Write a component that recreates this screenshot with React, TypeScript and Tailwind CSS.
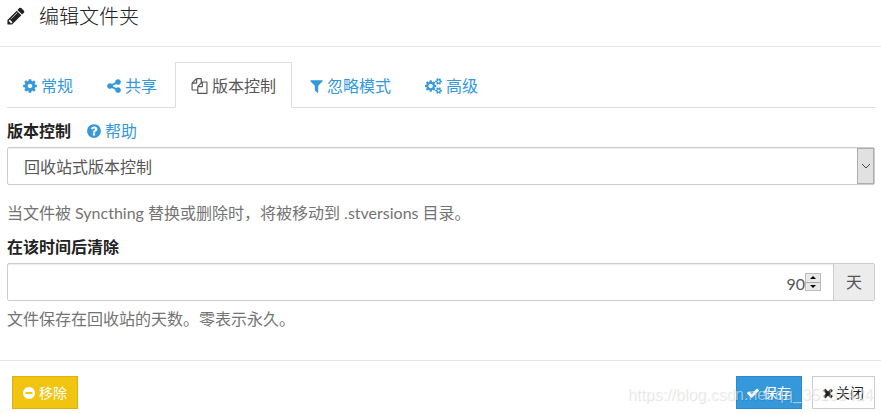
import { useState } from "react";
import type { ReactNode } from "react";

const DISC =
  "m320-64q0 209-103 385.5t-279.5 279.5-385.5 103-385.5-103-279.5-279.5-103-385.5 103-385.5 279.5-279.5 385.5-103 385.5 103 279.5 279.5 103 385.5z";

const SMALL_COG =
  "v140q0 16-149 31-12 27-30 52 51 113 51 138 0 4-4 7-122 71-124 71-8 0-46-47t-52-68q-20 2-30 2t-30-2q-14 21-52 68t-46 47q-2 0-124-71-4-3-4-7 0-25 51-138-18-25-30-52-149-15-149-31v-140q0-16 149-31 13-29 30-52-51-113-51-138 0-4 4-7 4-2 35-20t59-34 30-16q8 0 46 46.5t52 67.5q20-2 30-2t30 2q51-71 92-112l6-2q4 0 124 70 4 3 4 7 0 25-51 138 17 23 30 52 149 15 149 31z";

const ICONS = {
  pencil: {
    viewBox: "128 0 1536 1792",
    d: "M491 1536l91-91-235-235-91 91v107h128v128h107zm523-928q0-22-22-22-10 0-17 7l-542 542q-7 7-7 17 0 22 22 22 10 0 17-7l542-542q7-7 7-17zm-54-192l416 416-832 832h-416v-416zm683 96q0 53-37 90l-166 166-416-416 166-165q36-38 90-38 53 0 91 38l235 234q37 39 37 91z",
  },
  cog: {
    viewBox: "128 0 1536 1792",
    d: "M1152 896q0-106-75-181t-181-75-181 75-75 181 75 181 181 75 181-75 75-181zm512-109v222q0 12-8 23t-20 13l-185 28q-19 54-39 91 35 50 107 138 10 12 10 25t-9 23q-27 37-99 108t-94 71q-12 0-26-9l-138-108q-44 23-91 38-16 136-29 186-7 28-36 28h-222q-14 0-24.5-8.5t-11.5-21.5l-28-184q-49-16-90-37l-141 107q-10 9-25 9-14 0-25-11-126-114-165-168-7-10-7-23 0-12 8-23 15-21 51-66.5t54-70.5q-27-50-41-99l-183-27q-13-2-21-12.5t-8-23.5v-222q0-12 8-23t19-13l186-28q14-46 39-92-40-57-107-138-10-12-10-24 0-10 9-23 26-36 98.5-107.5t94.5-71.5q13 0 26 10l138 107q44-23 91-38 16-136 29-186 7-28 36-28h222q14 0 24.5 8.5t11.5 21.5l28 184q49 16 90 37l142-107q9-9 24-9 13 0 25 10 129 119 165 170 7 8 7 22 0 12-8 23-15 21-51 66.5t-54 70.5q26 50 41 98l183 28q13 2 21 12.5t8 23.5z",
  },
  share: {
    viewBox: "128 0 1536 1792",
    d: "M1344 1024q133 0 226.5 93.5t93.5 226.5-93.5 226.5-226.5 93.5-226.5-93.5-93.5-226.5q0-12 2-34l-360-180q-92 86-218 86-133 0-226.5-93.5t-93.5-226.5 93.5-226.5 226.5-93.5q126 0 218 86l360-180q-2-22-2-34 0-133 93.5-226.5t226.5-93.5 226.5 93.5 93.5 226.5-93.5 226.5-226.5 93.5q-126 0-218-86l-360 180q2 22 2 34t-2 34l360 180q92-86 218-86z",
  },
  files: {
    viewBox: "0 0 1792 1792",
    d: "M1696 384q40 0 68 28t28 68v1216q0 40-28 68t-68 28h-960q-40 0-68-28t-28-68v-288h-544q-40 0-68-28t-28-68v-672q0-40 20-88t48-76l408-408q28-28 76-48t88-20h416q40 0 68 28t28 68v328q68-40 128-40h416zm-544 213l-299 299h299v-299zm-640-384l-299 299h299v-299zm196 647l316-316v-416h-384v416q0 40-28 68t-68 28h-416v640h512v-256q0-40 20-88t48-76zm956 804v-1152h-384v416q0 40-28 68t-68 28h-416v640h896z",
  },
  filter: {
    viewBox: "192 0 1408 1792",
    d: "M1595 295q17 41-14 70l-493 493v742q0 42-39 59-13 5-25 5-27 0-45-19l-256-256q-19-19-19-45v-486l-493-493q-31-29-14-70 17-39 59-39h1280q42 0 59 39z",
  },
  cogs: {
    viewBox: "-64 0 1920 1792",
    d:
      "M832 896q0-106-75-181t-181-75-181 75-75 181 75 181 181 75 181-75 75-181zm768 512q0-52-38-90t-90-38-90 38-38 90q0 53 37.5 90.5t90.5 37.5 90.5-37.5 37.5-90.5zm0-1024q0-52-38-90t-90-38-90 38-38 90q0 53 37.5 90.5t90.5 37.5 90.5-37.5 37.5-90.5zm-384 421v185q0 10-7 19.5t-16 10.5l-155 24q-11 35-32 76 34 48 90 115 7 11 7 20 0 12-7 19-23 30-82.5 89.5t-78.5 59.5q-11 0-21-7l-115-90q-37 19-77 31-11 108-23 155-7 24-30 24h-186q-11 0-20-7.5t-10-17.5l-23-153q-34-10-75-31l-118 89q-7 7-20 7-11 0-21-8-144-133-144-160 0-9 7-19 10-14 41-53t47-61q-23-44-35-82l-152-24q-10-1-17-9.5t-7-19.5v-185q0-10 7-19.5t16-10.5l155-24q11-35 32-76-34-48-90-115-7-11-7-20 0-12 7-20 22-30 82-89t79-59q11 0 21 7l115 90q34-18 77-32 11-108 23-154 7-24 30-24h186q11 0 20 7.5t10 17.5l23 153q34 10 75 31l118-89q8-7 20-7 11 0 21 8 144 133 144 160 0 8-7 19-12 16-42 54t-45 60q23 48 34 82l152 23q10 2 17 10.5t7 19.5zm640 533" +
      SMALL_COG +
      "m0-1024" +
      SMALL_COG,
  },
  question: {
    viewBox: "128 0 1536 1792",
    d:
      "M1024 1376v-192q0-14-9-23t-23-9h-192q-14 0-23 9t-9 23v192q0 14 9 23t23 9h192q14 0 23-9t9-23zm256-672q0-88-55.5-163t-138.5-116-170-41q-243 0-371 213-15 24 8 42l132 100q7 6 19 6 16 0 25-12 53-68 86-92 34-24 86-24 48 0 85.5 26t37.5 59q0 38-20 61t-68 45q-63 28-115.5 86.5t-52.5 125.5v36q0 14 9 23t23 9h192q14 0 23-9t9-23q0-19 21.5-49.5t54.5-49.5q32-18 49-28.5t46-35 44.5-48 28-60.5 12.5-81zm64 256" +
      DISC,
  },
  minus: {
    viewBox: "128 0 1536 1792",
    d:
      "M1344 960v-128q0-26-19-45t-45-19h-768q-26 0-45 19t-19 45v128q0 26 19 45t45 19h768q26 0 45-19t19-45z" +
      DISC,
  },
  check: {
    viewBox: "121 0 1550 1792",
    d: "M1671 566q0 40-28 68l-724 724-136 136q-28 28-68 28t-68-28l-136-136-362-362q-28-28-28-68t28-68l136-136q28-28 68-28t68 28l294 295 656-657q28-28 68-28t68 28l136 136q28 28 28 68z",
  },
  times: {
    viewBox: "256 0 1280 1792",
    d: "M1490 1322q0 40-28 68l-136 136q-28 28-68 28t-68-28l-294-294-294 294q-28 28-68 28t-68-28l-136-136q-28-28-28-68t28-68l294-294-294-294q-28-28-28-68t28-68l136-136q28-28 68-28t68 28l294 294 294-294q28-28 68-28t68 28l136 136q28 28 28 68t-28 68l-294 294 294 294q28 28 28 68z",
  },
};

type IconName = keyof typeof ICONS;

const Icon = ({ name, className }: { name: IconName; className: string }) => (
  <svg
    viewBox={ICONS[name].viewBox}
    className={`shrink-0 fill-current ${className}`}
    aria-hidden="true"
  >
    <path d={ICONS[name].d} />
  </svg>
);

const TABS: { id: string; label: string; icon: IconName; iconClass: string }[] = [
  { id: "general", label: "常规", icon: "cog", iconClass: "h-4 w-3.5" },
  { id: "sharing", label: "共享", icon: "share", iconClass: "h-4 w-3.5" },
  { id: "versioning", label: "版本控制", icon: "files", iconClass: "h-4 w-[17px]" },
  { id: "ignore", label: "忽略模式", icon: "filter", iconClass: "h-4 w-[13px]" },
  { id: "advanced", label: "高级", icon: "cogs", iconClass: "h-4 w-[17px]" },
];

const HelpBlock = ({ children }: { children: ReactNode }) => (
  <p className="leading-6 text-[#737373]">{children}</p>
);

export default function App() {
  const [activeTab, setActiveTab] = useState("versioning");
  const [days, setDays] = useState(90);

  return (
    <div className="relative bg-white font-['Lato','Noto_Sans_CJK_SC',sans-serif] text-base text-[#222]">
      <header className="flex h-[47px] items-start border-b border-[#e5e5e5] pl-[7px]">
        <h4 className="flex items-center gap-3.5 text-xl leading-8 font-light">
          <Icon name="pencil" className="h-5 w-[18px]" />
          编辑文件夹
        </h4>
      </header>

      <main className="pt-[15px] pr-1.5 pb-7 pl-[7px]">
        <div role="tablist" className="flex gap-0.5 border-b border-[#ddd]">
          {TABS.map((tab) => (
            <button
              key={tab.id}
              type="button"
              role="tab"
              aria-selected={activeTab === tab.id}
              onClick={() => setActiveTab(tab.id)}
              className={`-mb-px flex h-[46px] items-center gap-1 border px-[15px] pt-0.5 ${
                activeTab === tab.id
                  ? "border-[#ddd] border-b-white bg-white text-[#555]"
                  : "border-transparent text-[#3498db]"
              }`}
            >
              <Icon name={tab.icon} className={tab.iconClass} />
              {tab.label}
            </button>
          ))}
        </div>

        <div className="flex items-center gap-4 pt-[11px] pb-1 leading-6">
          <label htmlFor="versioning" className="font-bold">
            版本控制
          </label>
          <a href="#help" className="flex items-center gap-1 text-[#3498db]">
            <Icon name="question" className="h-4 w-3.5" />
            帮助
          </a>
        </div>
        <div className="relative">
          <select
            id="versioning"
            className="block h-[38px] w-full appearance-none rounded-xs border border-[#ccc] bg-white pt-0.5 pr-8 pl-4 text-[#555] shadow-[inset_0_1px_1px_rgba(0,0,0,0.075)]"
          >
            <option>回收站式版本控制</option>
          </select>
          <span className="pointer-events-none absolute inset-y-px right-px flex w-[17px] items-center justify-center border border-[#adadad] bg-[#e1e1e1]">
            <svg viewBox="0 0 10 6" className="h-1.5 w-2.5 fill-none stroke-[#444]">
              <path d="M1 1l4 4 4-4" />
            </svg>
          </span>
        </div>
        <div className="pt-4 pb-2.5">
          <HelpBlock>
            当文件被 Syncthing 替换或删除时，将被移动到 .stversions 目录。
          </HelpBlock>
        </div>

        <label htmlFor="days" className="block pb-1 leading-6 font-bold">
          在该时间后清除
        </label>
        <div className="flex h-[38px] rounded-xs border border-[#ccc] text-[#555]">
          <div className="flex flex-1 items-center pr-3 shadow-[inset_0_1px_1px_rgba(0,0,0,0.075)]">
            <input
              id="days"
              type="number"
              value={days}
              onChange={(e) => setDays(Number(e.target.value))}
              className="h-full min-w-0 flex-1 bg-transparent pt-0.5 text-right outline-none [&::-webkit-inner-spin-button]:appearance-none"
            />
            <span className="flex h-[18px] w-4 flex-col border border-[#bbb] bg-[#e9e9e9]">
              <button
                type="button"
                aria-label="增加"
                onClick={() => setDays(days + 1)}
                className="flex flex-1 items-center justify-center border-b border-[#aaa]"
              >
                <svg viewBox="0 0 6 3" className="h-[3px] w-1.5 fill-black">
                  <path d="M0 3l3-3 3 3z" />
                </svg>
              </button>
              <button
                type="button"
                aria-label="减少"
                onClick={() => setDays(days - 1)}
                className="flex flex-1 items-center justify-center"
              >
                <svg viewBox="0 0 6 3" className="h-[3px] w-1.5 fill-black">
                  <path d="M0 0l3 3 3-3z" />
                </svg>
              </button>
            </span>
          </div>
          <span className="flex w-[41px] items-center justify-center border-l border-[#ccc] bg-[#ececec]">
            天
          </span>
        </div>
        <div className="pt-1.5 pb-px">
          <HelpBlock>文件保存在回收站的天数。零表示永久。</HelpBlock>
        </div>
      </main>

      <footer className="flex items-center justify-between border-t border-[#e5e5e5] pt-[15px] pr-1.5 pb-1 pl-3 text-sm">
        <button
          type="button"
          className="flex h-[33px] items-center gap-1 border border-[#deb20d] bg-[#f1c40f] px-2.5 text-white"
        >
          <Icon name="minus" className="h-3.5 w-3" />
          移除
        </button>
        <div className="flex gap-2.5">
          <button
            type="button"
            className="flex h-[33px] items-center gap-1 border border-[#258cd1] bg-[#3498db] px-2.5 text-white"
          >
            <Icon name="check" className="h-3.5 w-3" />
            保存
          </button>
          <button
            type="button"
            className="flex h-[33px] items-center gap-[3px] border border-[#ccc] bg-white px-2.5"
          >
            <Icon name="times" className="h-3.5 w-2.5" />
            关闭
          </button>
        </div>
      </footer>

      <span className="pointer-events-none absolute right-2 bottom-1.5 font-['Liberation_Sans',sans-serif] text-base text-white/50 [text-shadow:1px_1px_1px_rgba(0,0,0,0.12)]">
        https://blog.csdn.net/qq_35183424
      </span>
    </div>
  );
}
